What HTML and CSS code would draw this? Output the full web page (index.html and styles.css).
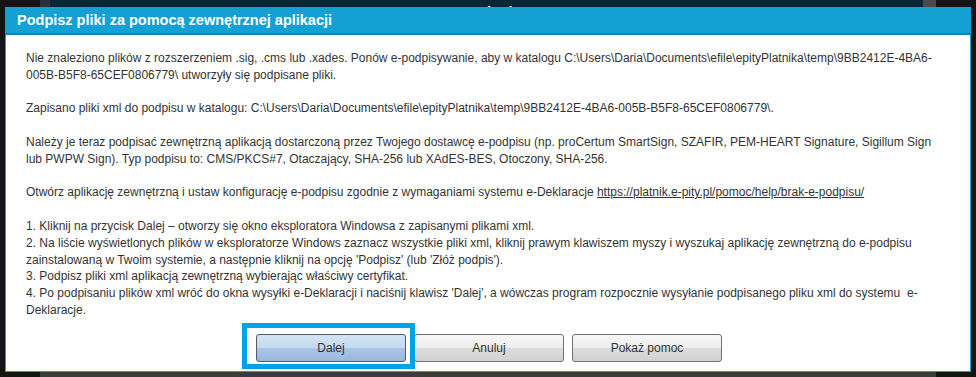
FILE: index.html
```html
<!DOCTYPE html>
<html>
<head>
  <meta charset="utf-8">
  <title>Podpisz pliki</title>
  <link rel="stylesheet" href="styles.css">
</head>
<body>
  <!-- page behind the dialog -->
  <div class="app">
    <div class="app-top">
      <span class="app-side"></span>
      <span class="app-title">Wysyłanie</span>
      <span class="app-scroll"></span>
    </div>
  </div>

  <!-- sign dialog -->
  <div class="dialog">
    <div class="dialog-header">Podpisz pliki za pomocą zewnętrznej aplikacji</div>
    <div class="dialog-body">
      <div class="msg">
        <p>Nie znaleziono plików z rozszerzeniem .sig, .cms lub .xades. Ponów e-podpisywanie, aby w katalogu C:\Users\Daria\Documents\efile\epityPlatnika\temp\9BB2412E-4BA6-<br>005B-B5F8-65CEF0806779\ utworzyły się podpisane pliki.</p>
        <p>Zapisano pliki xml do podpisu w katalogu: C:\Users\Daria\Documents\efile\epityPlatnika\temp\9BB2412E-4BA6-005B-B5F8-65CEF0806779\.</p>
        <p>Należy je teraz podpisać zewnętrzną aplikacją dostarczoną przez Twojego dostawcę e-podpisu (np. proCertum SmartSign, SZAFIR, PEM-HEART Signature, Sigillum Sign<br>lub PWPW Sign). Typ podpisu to: CMS/PKCS#7, Otaczający, SHA-256 lub XAdES-BES, Otoczony, SHA-256.</p>
        <p>Otwórz aplikację zewnętrzną i ustaw konfigurację e-podpisu zgodnie z wymaganiami systemu e-Deklaracje <a href="#">https://platnik.e-pity.pl/pomoc/help/brak-e-podpisu/</a></p>
        <p>1. Kliknij na przycisk Dalej – otworzy się okno eksploratora Windowsa z zapisanymi plikami xml.<br>2. Na liście wyświetlonych plików w eksploratorze Windows zaznacz wszystkie pliki xml, kliknij prawym klawiszem myszy i wyszukaj aplikację zewnętrzną do e-podpisu<br>zainstalowaną w Twoim systemie, a następnie kliknij na opcję 'Podpisz' (lub 'Złóż podpis').<br>3. Podpisz pliki xml aplikacją zewnętrzną wybierając właściwy certyfikat.<br>4. Po podpisaniu plików xml wróć do okna wysyłki e-Deklaracji i naciśnij klawisz 'Dalej', a wówczas program rozpocznie wysyłanie podpisanego pliku xml do systemu &nbsp;e-<br>Deklaracje.</p>
      </div>
      <div class="buttons">
        <div class="btn-wrap">
          <button class="btn btn-primary">Dalej</button>
          <span class="highlight"></span>
        </div>
        <button class="btn">Anuluj</button>
        <button class="btn">Pokaż pomoc</button>
      </div>
    </div>
  </div>
</body>
</html>
```

FILE: styles.css
```css
/* Backdrop */
body {
  margin: 0;
  height: 377px;
  overflow: hidden;
  background-color: #141414;
  font-family: "Liberation Sans", Arial, sans-serif;
  position: relative;
}
.app {
  margin-left: 40px;
  width: 896px;
  height: 377px;
  background: linear-gradient(#0c2433 0, #0f2a3a 50%, #3b3b3b 50%, #3b3b3b 100%);
}
.app-top {
  display: flex;
  height: 40px;
}
.app-side {
  width: 10px;
  background-color: #2c2f33;
}
.app-title {
  flex: 1;
  padding-left: 398px;
  padding-top: 3px;
  color: #e8eef2;
  font-weight: bold;
  font-size: 15px;
}
.app-scroll {
  width: 13px;
  background-color: #4a4a4a;
}

/* Dialog */
.dialog {
  position: absolute;
  left: 5px;
  top: 7px;
  width: 966px;
  height: 365px;
  display: flex;
  flex-direction: column;
}
.dialog-header {
  height: 26px;
  line-height: 26px;
  padding-left: 12px;
  background-color: #14a0d3;
  border-bottom: 2px solid #0f86b2;
  color: #ffffff;
  font-weight: bold;
  font-size: 14.5px;
}
.dialog-body {
  flex: 1;
  background-color: #ffffff;
  border: 1px solid #1aa1d4;
  border-top: none;
  padding: 15px 15px 0 20px;
}
.msg {
  font-size: 12px;
  line-height: 16.8px;
  color: #333333;
  white-space: nowrap;
}
.msg p {
  margin: 0 0 16.8px 0;
}
.msg p:last-child {
  margin-bottom: 0;
}
.msg a {
  color: #333333;
  text-decoration: underline;
}

/* Buttons */
.buttons {
  display: flex;
  justify-content: center;
  gap: 8px;
  margin-top: 15px;
  margin-right: 3px;
}
.btn-wrap {
  position: relative;
  display: flex;
}
.btn {
  width: 150px;
  height: 28px;
  padding: 0;
  border: 1px solid #707070;
  border-radius: 3px;
  background: linear-gradient(#f7f7f7 0, #ededed 50%, #dddddd 50%, #d1d1d1 100%);
  font-family: "Liberation Sans", Arial, sans-serif;
  font-size: 12px;
  color: #333333;
}
.btn-primary {
  border-color: #555a60;
  background: linear-gradient(#d3e4f5 0, #c5daf0 50%, #a9c7e7 50%, #98b8de 100%);
}
.highlight {
  position: absolute;
  top: -11px;
  left: -14px;
  right: -9px;
  bottom: -7px;
  border: 5px solid #00a3e8;
  pointer-events: none;
}
```
